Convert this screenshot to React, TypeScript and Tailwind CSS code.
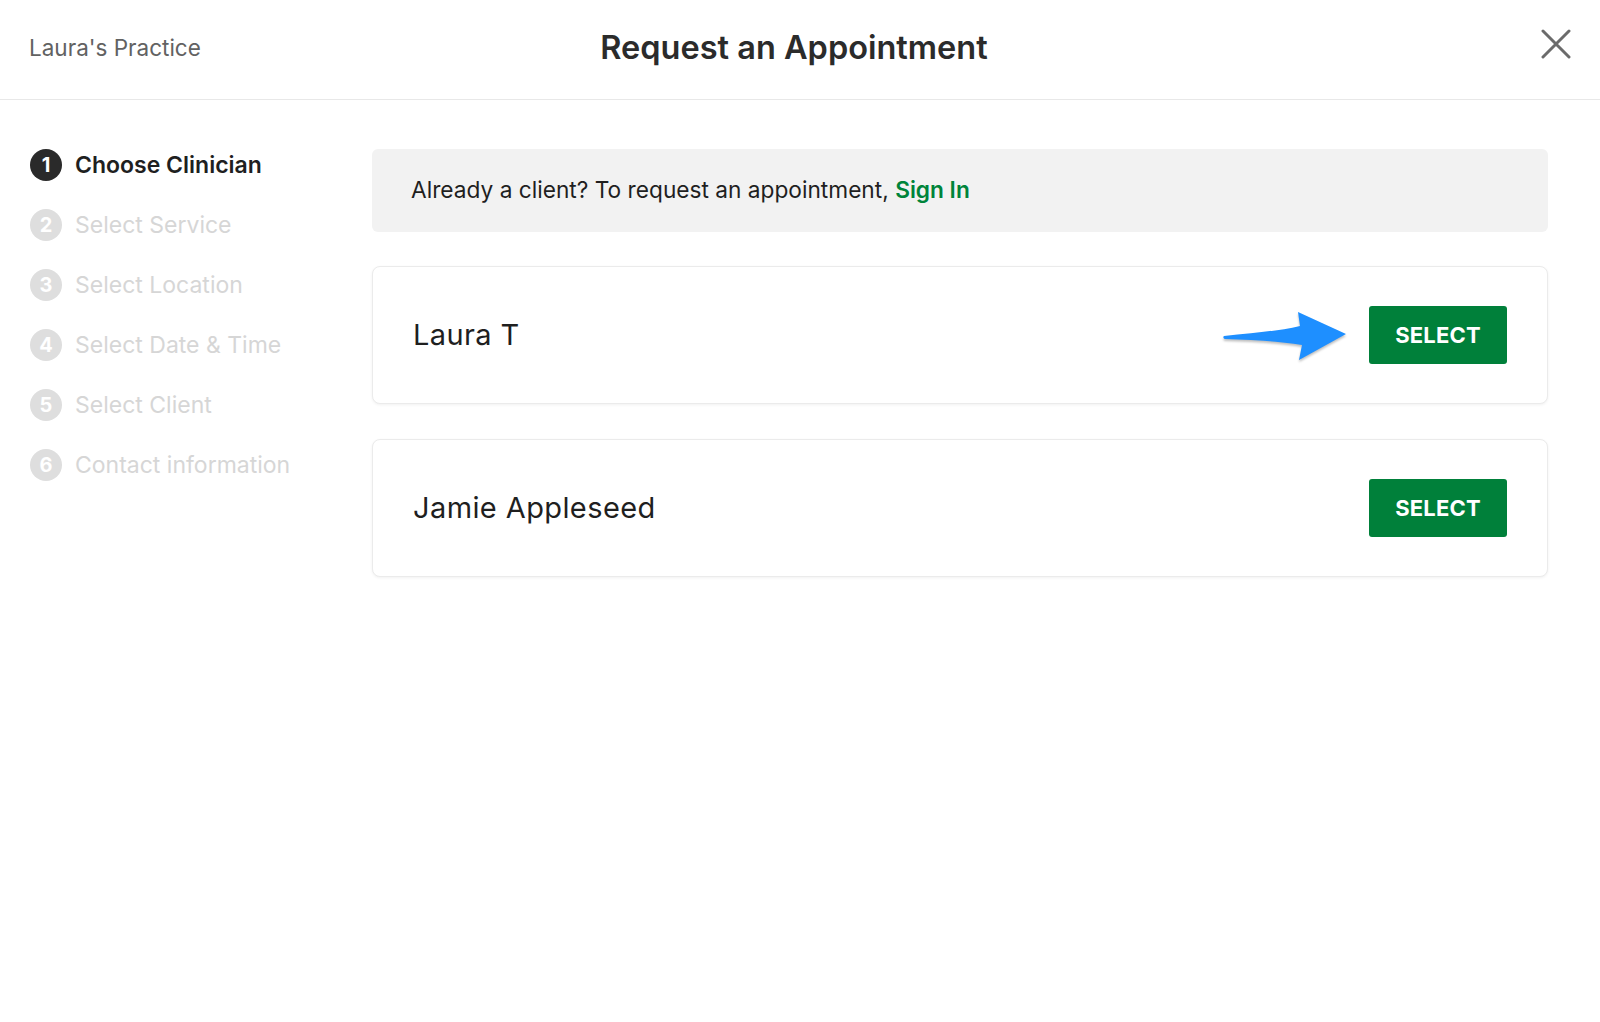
import React from "react";
import clsx from "clsx";

const steps = [
  "Choose Clinician",
  "Select Service",
  "Select Location",
  "Select Date & Time",
  "Select Client",
  "Contact information",
];

const clinicians = ["Laura T", "Jamie Appleseed"];

const Arrow = () => (
  <svg
    width="126"
    height="52"
    viewBox="0 0 126 52"
    className="drop-shadow-[0_2px_1px_rgba(0,0,0,0.25)]"
  >
    <path
      d="M2 26 C 30 23, 58 21, 78 16 L 76 2 L 124 24 L 77 50 C 78 45, 79 40, 80 35 C 58 31, 30 30, 3 29 C 1 28.5, 1 26.5, 2 26 Z"
      fill="#1e8fff"
    />
  </svg>
);

const CloseIcon = () => (
  <svg width="30" height="30" viewBox="0 0 30 30">
    <path
      d="M2 2 L28 28 M28 2 L2 28"
      stroke="#6b6b6b"
      strokeWidth="3"
      strokeLinecap="round"
    />
  </svg>
);

const ClinicianCard = ({ name, arrow }: { name: string; arrow?: boolean }) => (
  <div className="flex items-center h-[138px] rounded-lg border border-[#ebebeb] shadow-[0_1px_3px_rgba(0,0,0,0.06)] bg-white pl-[40px] pr-[40px]">
    <span className="text-[29px] text-[#1f1f1f] tracking-[0.4px] flex-1">
      {name}
    </span>
    {arrow && (
      <div className="mr-[21px] mt-[2px]">
        <Arrow />
      </div>
    )}
    <button className="w-[138px] h-[58px] rounded-[3px] bg-[#00803a] text-white text-[22px] font-bold tracking-[0.2px]">
      SELECT
    </button>
  </div>
);

export default function App() {
  return (
    <div
      className="w-full h-[1022px] bg-white"
      style={{ fontFamily: "Inter, 'Noto Sans', sans-serif" }}
    >
      <header className="grid grid-cols-[1fr_auto_1fr] items-center h-[100px] border-b border-[#e8e8e8] px-[29px] pb-[3px]">
        <span className="text-[22.5px] text-[#626262]">Laura's Practice</span>
        <h1 className="text-[32.5px] font-semibold text-[#2b2b2b] mr-[12px]">
          Request an Appointment
        </h1>
        <div className="flex justify-end pb-[8px]">
          <CloseIcon />
        </div>
      </header>
      <div className="flex pl-[30px] pr-[52px]">
        <nav className="w-[342px] shrink-0 pt-[35px]">
          {steps.map((step, i) => (
            <div key={step} className="flex items-center h-[60px] gap-[13px]">
              <span
                className={clsx(
                  "flex items-center justify-center w-[32px] h-[32px] rounded-full text-white text-[20px] font-bold",
                  i === 0 ? "bg-[#2a2a2a]" : "bg-[#dedede]"
                )}
              >
                {i + 1}
              </span>
              <span
                className={clsx(
                  "text-[23px]",
                  i === 0
                    ? "font-semibold text-[#1f1f1f]"
                    : "text-[#d6d6d6]"
                )}
              >
                {step}
              </span>
            </div>
          ))}
        </nav>
        <main className="flex-1 pt-[49px] flex flex-col">
          <div className="flex items-center h-[83px] rounded-md bg-[#f2f2f2] px-[39px] text-[22.7px] text-[#1f1f1f]">
            <span>
              Already a client? To request an appointment,{" "}
              <span className="font-semibold text-[#00843a]">Sign In</span>
            </span>
          </div>
          <div className="mt-[34px]">
            <ClinicianCard name={clinicians[0]} arrow />
          </div>
          <div className="mt-[35px]">
            <ClinicianCard name={clinicians[1]} />
          </div>
        </main>
      </div>
    </div>
  );
}
